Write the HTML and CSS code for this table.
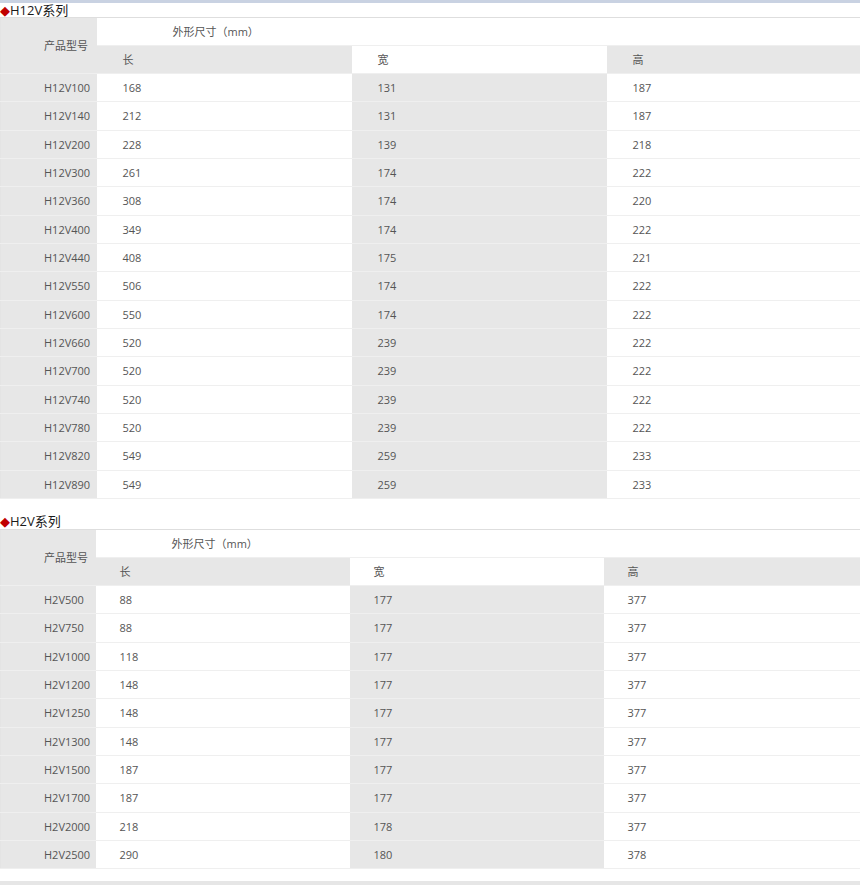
FILE: index.html
```html
<!DOCTYPE html>
<html lang="zh-CN">
<head>
<meta charset="utf-8">
<title>H12V / H2V 系列</title>
<link rel="stylesheet" href="styles.css">
</head>
<body>
<div class="topbar"></div>

<div class="series">
  <div class="title"><span class="diamond">◆</span>H12V系列</div>
  <table class="spec spec-a">
    <colgroup><col class="c1"><col class="c2"><col class="c3"><col class="c4"></colgroup>
    <tr class="head"><td rowspan="2" class="model">产品型号</td><td colspan="3" class="dim-h">外形尺寸（mm）</td></tr>
    <tr class="head sub"><td>长</td><td>宽</td><td>高</td></tr>
    <tr><td>H12V100</td><td>168</td><td>131</td><td>187</td></tr>
    <tr><td>H12V140</td><td>212</td><td>131</td><td>187</td></tr>
    <tr><td>H12V200</td><td>228</td><td>139</td><td>218</td></tr>
    <tr><td>H12V300</td><td>261</td><td>174</td><td>222</td></tr>
    <tr><td>H12V360</td><td>308</td><td>174</td><td>220</td></tr>
    <tr><td>H12V400</td><td>349</td><td>174</td><td>222</td></tr>
    <tr><td>H12V440</td><td>408</td><td>175</td><td>221</td></tr>
    <tr><td>H12V550</td><td>506</td><td>174</td><td>222</td></tr>
    <tr><td>H12V600</td><td>550</td><td>174</td><td>222</td></tr>
    <tr><td>H12V660</td><td>520</td><td>239</td><td>222</td></tr>
    <tr><td>H12V700</td><td>520</td><td>239</td><td>222</td></tr>
    <tr><td>H12V740</td><td>520</td><td>239</td><td>222</td></tr>
    <tr><td>H12V780</td><td>520</td><td>239</td><td>222</td></tr>
    <tr><td>H12V820</td><td>549</td><td>259</td><td>233</td></tr>
    <tr><td>H12V890</td><td>549</td><td>259</td><td>233</td></tr>
  </table>
</div>

<div class="series second">
  <div class="title"><span class="diamond">◆</span>H2V系列</div>
  <table class="spec spec-b">
    <colgroup><col class="c1"><col class="c2"><col class="c3"><col class="c4"></colgroup>
    <tr class="head"><td rowspan="2" class="model">产品型号</td><td colspan="3" class="dim-h">外形尺寸（mm）</td></tr>
    <tr class="head sub"><td>长</td><td>宽</td><td>高</td></tr>
    <tr><td>H2V500</td><td>88</td><td>177</td><td>377</td></tr>
    <tr><td>H2V750</td><td>88</td><td>177</td><td>377</td></tr>
    <tr><td>H2V1000</td><td>118</td><td>177</td><td>377</td></tr>
    <tr><td>H2V1200</td><td>148</td><td>177</td><td>377</td></tr>
    <tr><td>H2V1250</td><td>148</td><td>177</td><td>377</td></tr>
    <tr><td>H2V1300</td><td>148</td><td>177</td><td>377</td></tr>
    <tr><td>H2V1500</td><td>187</td><td>177</td><td>377</td></tr>
    <tr><td>H2V1700</td><td>187</td><td>177</td><td>377</td></tr>
    <tr><td>H2V2000</td><td>218</td><td>178</td><td>377</td></tr>
    <tr><td>H2V2500</td><td>290</td><td>180</td><td>378</td></tr>
  </table>
</div>

<div class="bottombar"></div>
</body>
</html>
```

FILE: styles.css
```css
html, body {
  margin: 0;
  padding: 0;
  background: #fff;
}
body {
  width: 860px;
  font-family: "Open Sans", "Noto Sans CJK SC", sans-serif;
  font-size: 11px;
  color: #555;
}
.topbar {
  height: 3px;
  background: #c9d2e2;
}
.title {
  height: 14px;
  line-height: 14px;
  font-size: 13px;
  color: #1a1a1a;
  font-family: "Open Sans", "Noto Sans CJK SC", sans-serif;
  white-space: nowrap;
}
.diamond {
  color: #c00000;
  font-size: 13px;
  font-family: "DejaVu Sans", sans-serif;
}
.second {
  margin-top: 15px;
}
.second .title {
  height: 15px;
}
.spec {
  width: 860px;
  border-collapse: collapse;
  table-layout: fixed;
  border-top: 1px solid #dedede;
  border-left: 1px solid #e4e4e4;
  border-right: 1px solid #e4e4e4;
  border-bottom: 1px solid #e4e4e4;
}
.spec td {
  padding: 1px 0 0 26px;
  border-bottom: 1px solid #efefef;
  line-height: 14px;
  white-space: nowrap;
  vertical-align: middle;
}
.spec tr {
  height: 28.33px;
}
.spec tr.head {
  height: 28px;
}
.spec td:nth-child(odd) {
  background: #e7e7e7;
}
.spec td:nth-child(even) {
  background: #fff;
}
.spec tr:not(.sub) td:first-child {
  padding-left: 43px;
}
.spec .dim-h {
  padding-left: 76px;
}
.spec-a .c1 { width: 96px; }
.spec-a .c2 { width: 255px; }
.spec-a .c3 { width: 255px; }
.spec-a .c4 { width: 254px; }
.spec-b .c1 { width: 95px; }
.spec-b .c2 { width: 254px; }
.spec-b .c3 { width: 254px; }
.spec-b .c4 { width: 257px; }
.spec-b td { padding-left: 24px; }
.spec-b tr:not(.sub) td:first-child { padding-left: 43px; }
.spec-b .dim-h { padding-left: 76px; }
.bottombar {
  margin-top: 12px;
  height: 4px;
  background: #e6e6e6;
}
```
